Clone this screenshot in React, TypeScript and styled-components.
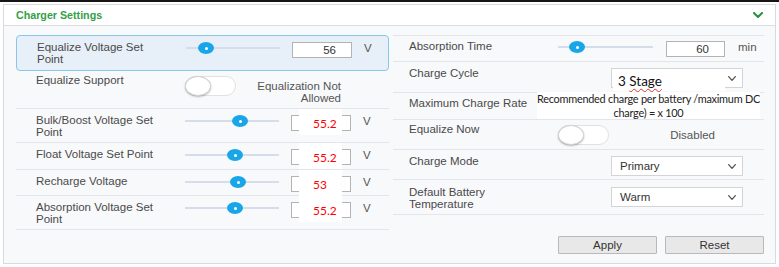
import React from "react";
import styled, { createGlobalStyle, css } from "styled-components";

const Global = createGlobalStyle`
  html, body { margin: 0; padding: 0; background: #fff; }
  body {
    font-family: "Liberation Sans", Arial, sans-serif;
    width: 779px;
    height: 267px;
    overflow: hidden;
  }
  *, *::before, *::after { box-sizing: border-box; }
`;

const Page = styled.div`
  border-top: 2px solid #161616;
  padding: 2px 0 0 3px;
`;

const Panel = styled.section`
  width: 773px;
  height: 260px;
  border: 1px solid #d9dadc;
  background: #f8f9fb;
`;

const Header = styled.header`
  height: 21px;
  display: flex;
  align-items: center;
  justify-content: space-between;
  padding: 0 12px;
  background: #fff;
  border-bottom: 1px solid #dcdde0;
`;

const Title = styled.h2`
  margin: 0;
  font-size: 10.7px;
  font-weight: bold;
  color: #34a047;
`;

const Body = styled.div`
  display: grid;
  grid-template-columns: 373px 1fr;
  column-gap: 4px;
  padding: 9px 11px 0 12px;
`;

const Column = styled.div<{ $ruled?: boolean }>`
  display: flex;
  flex-direction: column;
  ${(p) => p.$ruled && css`border-top: 1px solid #e3e5ea;`}
`;

const Row = styled.div<{ $h: number; $pt?: number; $hl?: boolean }>`
  position: relative;
  display: grid;
  column-gap: 12px;
  align-items: start;
  height: ${(p) => p.$h}px;
  padding-top: ${(p) => p.$pt ?? 6}px;
  border-bottom: 1px solid #e3e5ea;
  ${(p) =>
    p.$hl &&
    css`
      border: 1px solid #88c7e9;
      border-radius: 4px;
      background: #e7eff8;
    `}
`;

const LeftRow = styled(Row)`
  grid-template-columns: 137px 94px 60px auto;
  padding-left: 20px;
`;

const RightRow = styled(Row)`
  grid-template-columns: 136px 95px 59px auto;
  column-gap: 13px;
  padding-left: 16px;
`;

const Label = styled.div`
  font-size: 11.5px;
  line-height: 11.5px;
  color: #4a4a4a;
  max-width: 128px;
`;

const Track = styled.div`
  position: relative;
  height: 12px;
  &::before {
    content: "";
    position: absolute;
    left: 0;
    right: 0;
    top: 5px;
    height: 2px;
    background: #d5ddeb;
  }
`;

const Thumb = styled.span`
  position: absolute;
  top: 0;
  width: 16px;
  height: 12px;
  border-radius: 50%;
  background: #18a6e9;
  &::after {
    content: "";
    position: absolute;
    left: 6.5px;
    top: 4.5px;
    width: 3px;
    height: 3px;
    border-radius: 50%;
    background: #fff;
  }
`;

const ValueBox = styled.div`
  position: relative;
  height: 16px;
  border: 1px solid #b3b3b3;
  background: #fff;
  font-size: 11.5px;
  line-height: 14px;
  color: #333;
  text-align: right;
  padding-right: 15px;
`;

const PastedValue = styled.span`
  position: absolute;
  left: 7px;
  top: -7px;
  width: 43px;
  height: 26px;
  background: #fff;
  color: #ff0000;
  font-family: Lato, "Open Sans", sans-serif;
  font-size: 12px;
  line-height: 16px;
  text-align: left;
  padding: 7px 0 0 14px;
`;

const Unit = styled.span`
  font-size: 11.5px;
  line-height: 12px;
  color: #555;
`;

const ToggleCell = styled.div`
  grid-column: 2 / 4;
  display: flex;
  align-items: flex-start;
`;

const Switch = styled.span`
  position: relative;
  flex: none;
  width: 51px;
  height: 20px;
  margin-top: 1px;
  border: 1px solid #e1e1e1;
  border-radius: 10px;
  background: #fff;
`;

const Knob = styled.span`
  position: absolute;
  left: -1px;
  top: -1px;
  width: 26px;
  height: 20px;
  border-radius: 50%;
  background: #fff;
  border: 1px solid #d2d2d2;
  box-shadow: 0 1px 2px rgba(0, 0, 0, 0.28);
`;

const Status = styled.div`
  flex: 1;
  margin-top: 6px;
  padding-right: 10px;
  text-align: right;
  font-size: 11.5px;
  line-height: 11.5px;
  color: #555;
`;

const SelectBox = styled.div`
  position: relative;
  grid-column: 2 / -1;
  margin-left: 53px;
  width: 132px;
  height: 20px;
  display: flex;
  align-items: center;
  justify-content: space-between;
  padding: 0 6px 0 8px;
  border: 1px solid #d3d4d6;
  background: #fff;
  font-size: 11.5px;
  color: #333;
`;

const PastedSelect = styled.span`
  position: absolute;
  left: 1px;
  top: 3px;
  width: 112px;
  height: 19px;
  background: #fff;
  padding: 1px 0 0 5px;
  font-family: Lato, "Open Sans", sans-serif;
  font-size: 13.5px;
  line-height: 16px;
  color: #111;
`;

const Squiggle = styled.span`
  text-decoration: underline wavy #e03030;
  text-decoration-thickness: 1px;
  text-underline-offset: 2px;
  text-decoration-skip-ink: none;
`;

const PastedNote = styled.div`
  position: absolute;
  left: 144px;
  top: -1px;
  width: 223px;
  height: 27px;
  overflow: hidden;
  background: #fff;
  font-family: Lato, "Open Sans", sans-serif;
  font-size: 10.9px;
  letter-spacing: -0.25px;
  line-height: 14px;
  color: #222;
  text-align: center;
  padding-top: 0;
`;

const Actions = styled.div`
  display: flex;
  justify-content: flex-end;
  gap: 8px;
  margin-top: 21px;
`;

const Button = styled.button`
  width: 99px;
  height: 18px;
  padding: 0;
  border: 1px solid #b9b9b9;
  border-radius: 1px;
  background: #e8e8e8;
  font-family: "Liberation Sans", Arial, sans-serif;
  font-size: 11.5px;
  color: #333;
`;

const Chevron = ({ color, w, h, sw }: { color: string; w: number; h: number; sw: number }) => (
  <svg width={w} height={h} viewBox={`0 0 ${w} ${h}`} fill="none">
    <polyline
      points={`${sw / 2},${sw / 2} ${w / 2},${h - sw / 2} ${w - sw / 2},${sw / 2}`}
      stroke={color}
      strokeWidth={sw}
      strokeLinecap="round"
      strokeLinejoin="round"
    />
  </svg>
);

const Slider = ({ pos }: { pos: number }) => (
  <Track>
    <Thumb style={{ left: `${pos}px` }} />
  </Track>
);

type SliderRowProps = {
  label: string;
  pos: number;
  value?: string;
  pasted?: string;
  unit: string;
  h: number;
  hl?: boolean;
  pt?: number;
};

const LeftSliderRow = ({ label, pos, value, pasted, unit, h, hl, pt }: SliderRowProps) => (
  <LeftRow $h={h} $hl={hl} $pt={pt}>
    <Label>{label}</Label>
    <Slider pos={pos} />
    <ValueBox>
      {value}
      {pasted && <PastedValue>{pasted}</PastedValue>}
    </ValueBox>
    <Unit>{unit}</Unit>
  </LeftRow>
);

const SelectControl = ({ value, children }: { value?: string; children?: React.ReactNode }) => (
  <SelectBox>
    <span>{value}</span>
    <Chevron color="#555" w={8} h={5} sw={1.3} />
    {children}
  </SelectBox>
);

export default function App() {
  return (
    <>
      <Global />
      <Page>
        <Panel>
          <Header>
            <Title>Charger Settings</Title>
            <Chevron color="#23923f" w={10} h={6} sw={2} />
          </Header>
          <Body>
            <Column>
              <LeftSliderRow label="Equalize Voltage Set Point" pos={12} value="56" unit="V" h={36} hl pt={6} />
              <LeftRow $h={38} $pt={4}>
                <Label>Equalize Support</Label>
                <ToggleCell>
                  <Switch>
                    <Knob />
                  </Switch>
                  <Status>Equalization Not Allowed</Status>
                </ToggleCell>
              </LeftRow>
              <LeftSliderRow label="Bulk/Boost Voltage Set Point" pos={47} pasted="55.2" unit="V" h={34} />
              <LeftSliderRow label="Float Voltage Set Point" pos={42} pasted="55.2" unit="V" h={27} />
              <LeftSliderRow label="Recharge Voltage" pos={45} pasted="53" unit="V" h={26} />
              <LeftSliderRow label="Absorption Voltage Set Point" pos={42} pasted="55.2" unit="V" h={34} />
            </Column>
            <Column $ruled>
              <RightRow $h={26} $pt={5}>
                <Label>Absorption Time</Label>
                <Slider pos={11} />
                <ValueBox>60</ValueBox>
                <Unit>min</Unit>
              </RightRow>
              <RightRow $h={31}>
                <Label>Charge Cycle</Label>
                <SelectControl>
                  <PastedSelect>
                    3 <Squiggle>Stage</Squiggle>
                  </PastedSelect>
                </SelectControl>
              </RightRow>
              <RightRow $h={27} $pt={5}>
                <Label>Maximum Charge Rate</Label>
                <PastedNote>Recommended charge per battery /maximum DC charge) = x 100</PastedNote>
              </RightRow>
              <RightRow $h={30} $pt={4}>
                <Label>Equalize Now</Label>
                <ToggleCell>
                  <Switch>
                    <Knob />
                  </Switch>
                  <Status>Disabled</Status>
                </ToggleCell>
              </RightRow>
              <RightRow $h={30}>
                <Label>Charge Mode</Label>
                <SelectControl value="Primary" />
              </RightRow>
              <RightRow $h={35} $pt={7}>
                <Label>Default Battery Temperature</Label>
                <SelectControl value="Warm" />
              </RightRow>
              <Actions>
                <Button type="button">Apply</Button>
                <Button type="button">Reset</Button>
              </Actions>
            </Column>
          </Body>
        </Panel>
      </Page>
    </>
  );
}
